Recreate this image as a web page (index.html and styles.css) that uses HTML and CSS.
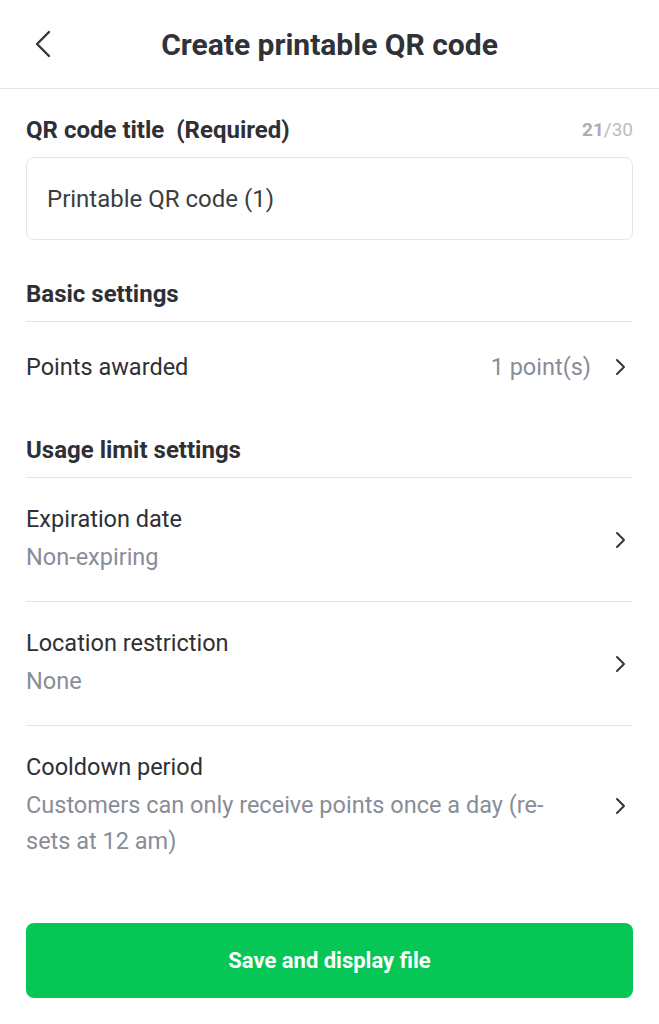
FILE: index.html
```html
<!DOCTYPE html>
<html>
<head>
    <title>Create printable QR code</title>
    <link rel="stylesheet" href="styles.css">
</head>
<body>
    <div class="header">
        <button class="back">
            <svg width="18" height="28" viewBox="0 0 18 28"><path d="M15 2 L3 14 L15 26" fill="none" stroke="#34363b" stroke-width="2.4" stroke-linecap="round" stroke-linejoin="round"/></svg>
        </button>
        <h1 class="title">Create printable QR code</h1>
        <span></span>
    </div>

    <div class="content">
        <div class="field-head">
            <span class="field-label">QR code title&nbsp; (Required)</span>
            <span class="counter"><b>21</b>/30</span>
        </div>
        <div class="input-box">Printable QR code (1)</div>

        <h2 class="section">Basic settings</h2>
        <div class="row single">
            <div class="row-text">
                <div class="row-label">Points awarded</div>
            </div>
            <span class="row-value">1 point(s)</span>
            <svg class="chev" width="12" height="18" viewBox="0 0 12 18"><path d="M3 2 L10 9 L3 16" fill="none" stroke="#34363b" stroke-width="2" stroke-linecap="round" stroke-linejoin="round"/></svg>
        </div>

        <h2 class="section">Usage limit settings</h2>
        <div class="row">
            <div class="row-text">
                <div class="row-label">Expiration date</div>
                <div class="row-sub">Non-expiring</div>
            </div>
            <svg class="chev" width="12" height="18" viewBox="0 0 12 18"><path d="M3 2 L10 9 L3 16" fill="none" stroke="#34363b" stroke-width="2" stroke-linecap="round" stroke-linejoin="round"/></svg>
        </div>
        <div class="row">
            <div class="row-text">
                <div class="row-label">Location restriction</div>
                <div class="row-sub">None</div>
            </div>
            <svg class="chev" width="12" height="18" viewBox="0 0 12 18"><path d="M3 2 L10 9 L3 16" fill="none" stroke="#34363b" stroke-width="2" stroke-linecap="round" stroke-linejoin="round"/></svg>
        </div>
        <div class="row last">
            <div class="row-text">
                <div class="row-label">Cooldown period</div>
                <div class="row-sub">Customers can only receive points once a day (re-sets at 12 am)</div>
            </div>
            <svg class="chev" width="12" height="18" viewBox="0 0 12 18"><path d="M3 2 L10 9 L3 16" fill="none" stroke="#34363b" stroke-width="2" stroke-linecap="round" stroke-linejoin="round"/></svg>
        </div>

        <button class="save">Save and display file</button>
    </div>
</body>
</html>
```

FILE: styles.css
```css
body {
    margin: 0;
    background: #fff;
    font-family: Roboto, "Liberation Sans", sans-serif;
    color: #2e3035;
}
.header {
    height: 88px;
    display: grid;
    grid-template-columns: 80px 1fr 80px;
    align-items: center;
    border-bottom: 1px solid #e4e5e7;
}
.back {
    border: none;
    background: none;
    padding: 0 0 0 34px;
    display: flex;
    align-items: center;
}
.title {
    margin: 0;
    text-align: center;
    font-size: 30px;
    font-weight: 700;
    color: #2f3237;
}
.content {
    padding: 0 26px;
}
.field-head {
    display: flex;
    justify-content: space-between;
    align-items: center;
    margin-top: 27px;
    line-height: 28px;
}
.field-label {
    font-size: 24px;
    font-weight: 700;
}
.counter {
    font-size: 19px;
    color: #b9bcc2;
}
.counter b {
    font-weight: 700;
    color: #a9adb4;
}
.input-box {
    margin-top: 13px;
    height: 81px;
    border: 1px solid #e3e5e8;
    border-radius: 8px;
    padding: 0 20px;
    display: flex;
    align-items: center;
    font-size: 24px;
    color: #3b3d42;
}
.section {
    margin: 40px 0 0;
    padding-bottom: 13px;
    border-bottom: 1px solid #e3e5e8;
    font-size: 24px;
    font-weight: 700;
    line-height: 28px;
}
.row {
    display: flex;
    align-items: center;
    padding: 27px 0 26px;
    border-bottom: 1px solid #e3e5e8;
}
.row.single {
    padding: 31px 0;
    border-bottom: none;
}
.row.single + .section {
    margin-top: 24px;
}
.row.last {
    border-bottom: none;
}
.row-text {
    flex: 1;
    padding-right: 40px;
}
.row-label {
    font-size: 23.5px;
    line-height: 28px;
    color: #2e3035;
}
.row-sub {
    margin-top: 6px;
    font-size: 23.5px;
    line-height: 36px;
    color: #888d98;
}
.row-value {
    font-size: 23.5px;
    color: #888d98;
    margin-right: 23px;
}
.chev {
    margin-right: 7px;
    flex-shrink: 0;
}
.save {
    display: block;
    width: 100%;
    height: 75px;
    margin-top: 38px;
    border: none;
    border-radius: 8px;
    background: #06c755;
    color: #fff;
    font-family: Roboto, "Liberation Sans", sans-serif;
    font-size: 22px;
    font-weight: 700;
}
```
